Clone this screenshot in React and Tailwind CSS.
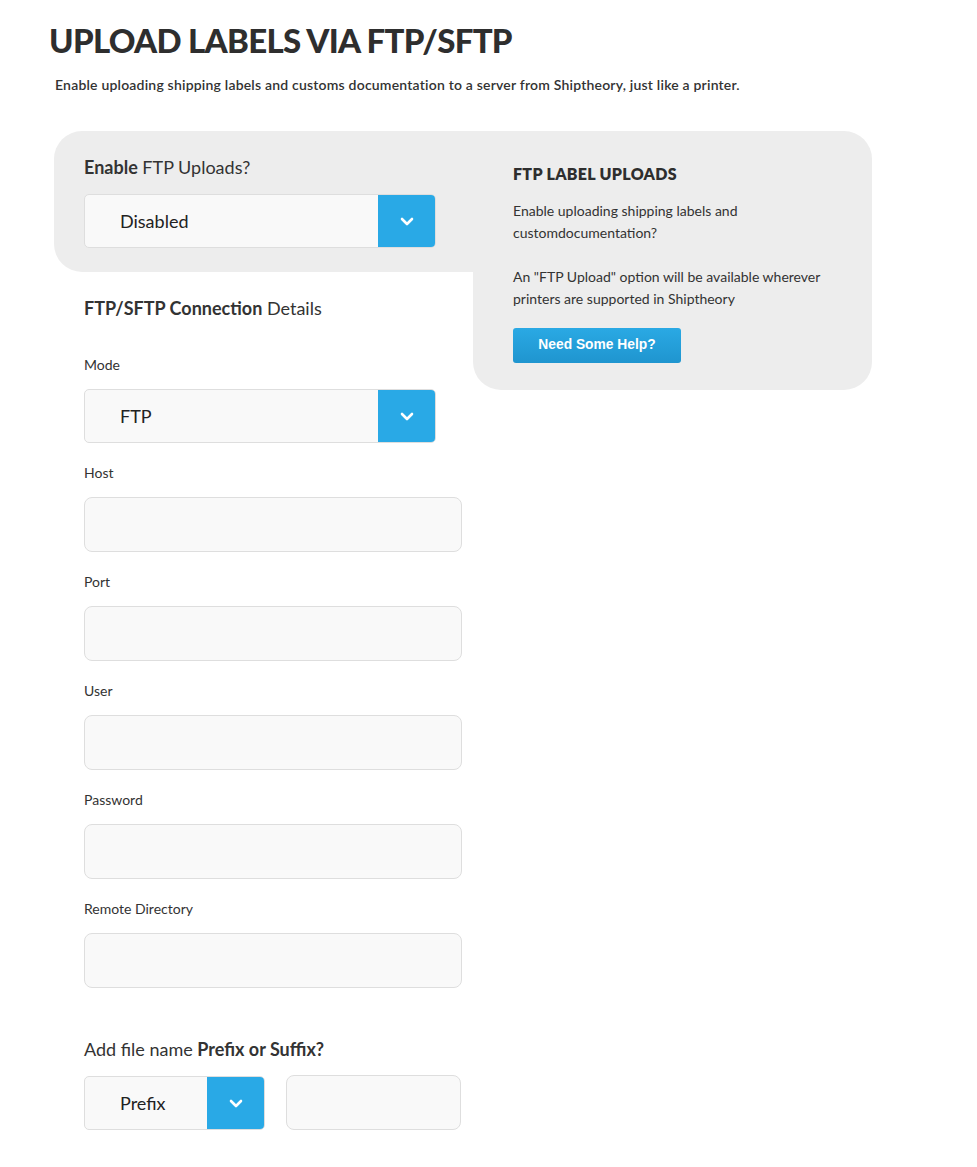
import React from 'react';

const FONT = { fontFamily: 'Lato, "Open Sans", sans-serif' };

function Chevron() {
  return (
    <svg width="14" height="9" viewBox="0 0 14 9" fill="none">
      <polyline points="2,2 7,7 12,2" stroke="white" strokeWidth="2.6" strokeLinecap="round" strokeLinejoin="round" />
    </svg>
  );
}

function Select({ value, width = 'w-[352px]', btn = 'w-[58px]' }) {
  return (
    <div className={`flex h-[54px] ${width} rounded-[5px] border border-[#dedede] bg-[#f9f9f9] overflow-hidden`}>
      <div className="flex-1 flex items-center pl-[35px] text-[18px] text-[#222]">{value}</div>
      <div className={`${btn} -my-px -mr-px bg-[#29a9e6] rounded-r-[5px] flex items-center justify-center`}>
        <Chevron />
      </div>
    </div>
  );
}

function Field({ label }) {
  return (
    <div className="mt-[20px]">
      <div className="text-[14px] text-[#333] leading-[20px]">{label}</div>
      <div className="mt-[14px] h-[55px] w-[378px] rounded-[8px] border border-[#dedede] bg-[#f9f9f9]" />
    </div>
  );
}

export default function App() {
  return (
    <div className="bg-white min-h-[1167px] w-[977px] text-[#333]" style={FONT}>
      <div className="pl-[49px] pt-[20px]">
        <h1 className="text-[33px] font-black leading-[40px] tracking-[-0.7px] text-[#2e2e2e]">UPLOAD LABELS VIA FTP/SFTP</h1>
        <p className="mt-[15px] ml-[6px] text-[14px] font-semibold tracking-[0.2px] text-[#333] leading-[20px]">
          Enable uploading shipping labels and customs documentation to a server from Shiptheory, just like a printer.
        </p>
      </div>

      <div className="flex mt-[36px] ml-[54px]">
        {/* Left column */}
        <div className="w-[419px]">
          <div className="bg-[#ededed] rounded-l-[28px] h-[141px] pl-[30px] pt-[24px]">
            <div className="text-[18px] leading-[24px]">
              <span className="font-bold">Enable</span> FTP Uploads?
            </div>
            <div className="mt-[15px]">
              <Select value="Disabled" />
            </div>
          </div>

          <div className="pl-[30px]">
            <div className="mt-[24px] text-[18px] leading-[24px]">
              <span className="font-bold">FTP/SFTP Connection</span> Details
            </div>
            <div className="mt-[35px] text-[14px] leading-[20px]">Mode</div>
            <div className="mt-[14px]">
              <Select value="FTP" />
            </div>
            <Field label="Host" />
            <Field label="Port" />
            <Field label="User" />
            <Field label="Password" />
            <Field label="Remote Directory" />

            <div className="mt-[49px] text-[18px] leading-[24px]">
              Add file name <span className="font-bold">Prefix or Suffix?</span>
            </div>
            <div className="mt-[15px] flex gap-[21px]">
              <Select value="Prefix" width="w-[181px]" btn="w-[58px]" />
              <div className="h-[55px] w-[175px] -mt-px rounded-[8px] border border-[#dedede] bg-[#f9f9f9]" />
            </div>
          </div>
        </div>

        {/* Right card */}
        <div className="w-[399px] h-[259px] bg-[#ededed] rounded-r-[28px] rounded-bl-[28px] pl-[40px] pt-[33px]">
          <h3 className="text-[16px] font-extrabold tracking-[0.3px] leading-[20px] text-[#2e2e2e]">FTP LABEL UPLOADS</h3>
          <p className="mt-[16px] text-[14px] leading-[22px] w-[330px]">
            Enable uploading shipping labels and customdocumentation?
          </p>
          <p className="mt-[22px] text-[14px] leading-[22px] w-[330px]">
            An "FTP Upload" option will be available wherever printers are supported in Shiptheory
          </p>
          <button
            className="mt-[18px] w-[168px] h-[35px] rounded-[3px] bg-gradient-to-b from-[#2aa9e4] to-[#1f95cf] text-white text-[13.8px] font-bold"
            style={{ fontFamily: '"Liberation Sans", Arial, sans-serif' }}
          >
            Need Some Help?
          </button>
        </div>
      </div>
    </div>
  );
}
